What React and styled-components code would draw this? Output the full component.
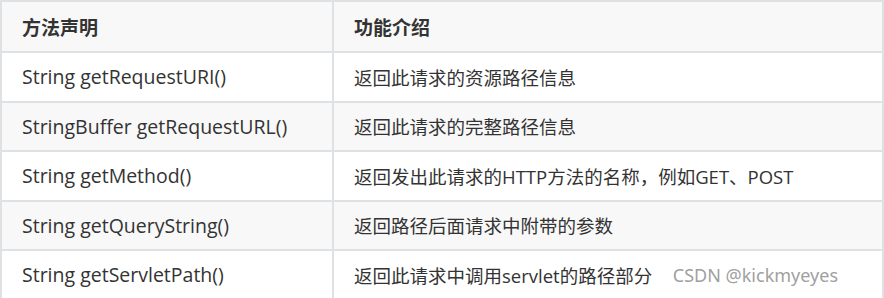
import React from 'react';
import styled, { createGlobalStyle } from 'styled-components';

const rows = [
  ['String getRequestURI()', '返回此请求的资源路径信息'],
  ['StringBuffer getRequestURL()', '返回此请求的完整路径信息'],
  ['String getMethod()', '返回发出此请求的HTTP方法的名称，例如GET、POST'],
  ['String getQueryString()', '返回路径后面请求中附带的参数'],
  ['String getServletPath()', '返回此请求中调用servlet的路径部分'],
];

const GlobalStyle = createGlobalStyle`
  body {
    margin: 0;
    background: #fff;
  }
`;

const Page = styled.div`
  position: relative;
  width: 884px;
  height: 298px;
  overflow: hidden;
  font-family: 'Open Sans', 'Noto Sans CJK SC', sans-serif;
  color: #333;
`;

const Table = styled.table`
  width: 884px;
  border-collapse: collapse;
  table-layout: fixed;
`;

const Row = styled.tr`
  background: ${p => (p.$striped ? '#f8f8f8' : '#fff')};
`;

const HeadCell = styled.th`
  height: 51px;
  padding: 0 20px;
  border: 2px solid #dfe2e5;
  background: #f8f8f8;
  text-align: left;
  font-size: 19px;
  font-weight: 700;
  box-sizing: border-box;
`;

const Cell = styled.td`
  height: 49.5px;
  padding: 0 20px;
  border: 2px solid #dfe2e5;
  white-space: nowrap;
  box-sizing: border-box;
  font-size: ${p => (p.$code ? '19.5px' : '18.5px')};
`;

const Watermark = styled.div`
  position: absolute;
  right: 46px;
  bottom: 11px;
  font-family: 'Noto Sans', sans-serif;
  font-size: 18px;
  color: #a0a0a0;
`;

const App = () => (
  <Page>
    <GlobalStyle />
    <Table>
      <colgroup>
        <col style={{ width: 332 }} />
        <col />
      </colgroup>
      <thead>
        <tr>
          <HeadCell>方法声明</HeadCell>
          <HeadCell>功能介绍</HeadCell>
        </tr>
      </thead>
      <tbody>
        {rows.map(([method, desc], index) => (
          <Row key={method} $striped={index % 2 === 1}>
            <Cell $code>{method}</Cell>
            <Cell>{desc}</Cell>
          </Row>
        ))}
      </tbody>
    </Table>
    <Watermark>CSDN @kickmyeyes</Watermark>
  </Page>
);

export default App;
